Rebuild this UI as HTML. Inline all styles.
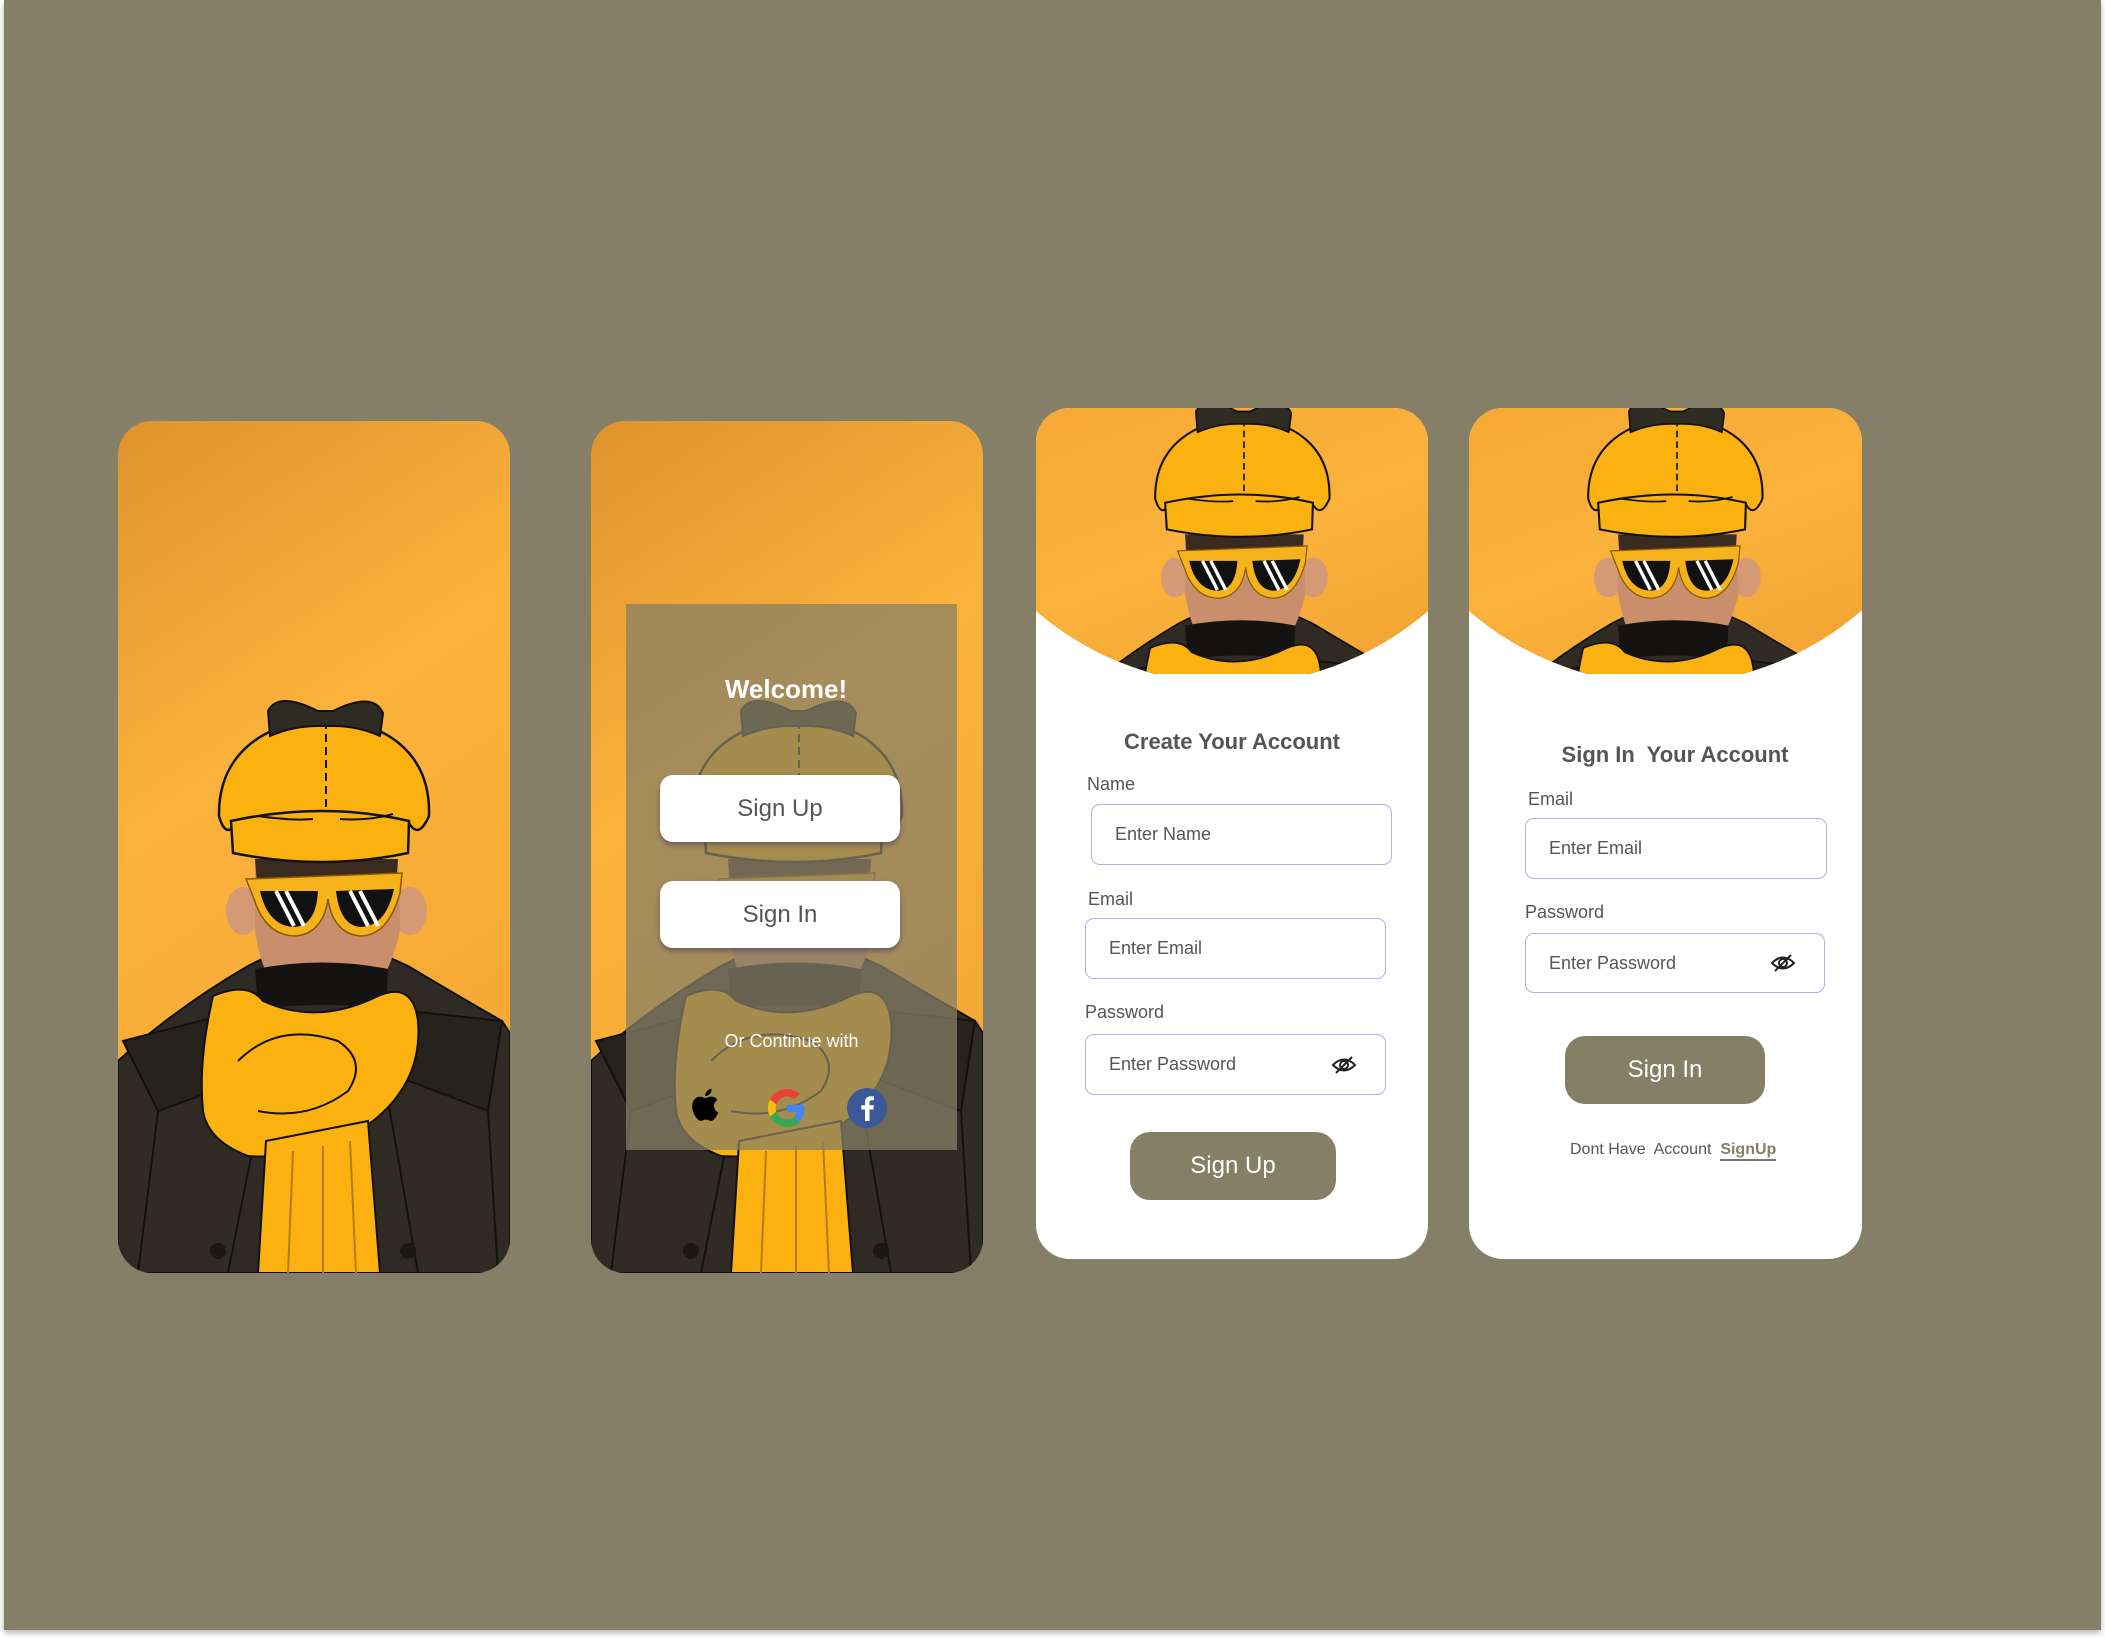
<!DOCTYPE html>
<html><head><meta charset="utf-8">
<style>
*{margin:0;padding:0;box-sizing:border-box}
html,body{width:2105px;height:1638px;background:#fff;overflow:hidden;font-family:"Liberation Sans",sans-serif}
#bg{position:absolute;left:4px;top:0;width:2097px;height:1630px;background:#847f66;box-shadow:0 3px 6px rgba(0,0,0,.3)}
.card{position:absolute;overflow:hidden;border-radius:34px}
.abs{position:absolute}
.wbtn{position:absolute;left:660px;width:240px;height:67px;background:#fff;border-radius:13px;box-shadow:0 3px 5px rgba(60,50,90,.5);color:#555;font-size:24px;text-align:center;line-height:67px}
.lbl{position:absolute;font-size:18px;color:#555}
.inp{position:absolute;border:1.5px solid #b3acee;border-radius:9px;font-size:18px;color:#555;padding-left:23px;display:flex;align-items:center}
.obtn{position:absolute;background:#857f66;border-radius:20px;color:#fff;font-size:24px;text-align:center}
.title{position:absolute;font-size:22px;font-weight:bold;color:#555;text-align:center;width:392px}
.eye{position:absolute;right:28px;top:50%;margin-top:-10px}
.top{position:absolute;left:0;top:0;height:266px;overflow:hidden;clip-path:circle(300px at 196px -24px);background:linear-gradient(160deg,#f7a835,#fbb23c 50%,#f0a232)}
</style></head><body>
<div id="bg"></div>
<svg width="0" height="0" style="position:absolute">
<defs>
<linearGradient id="og" x1="0" y1="0" x2="0.3" y2="1"><stop offset="0" stop-color="#df932e"/><stop offset=".45" stop-color="#fbb23c"/><stop offset="1" stop-color="#f5a834"/></linearGradient>
<g id="fig">
<path d="M0,852 L0,640 L20,622 Q70,580 130,545 L180,520 L235,520 L290,545 Q340,575 384,600 L392,612 L392,852 Z" fill="#2f2b24" stroke="#111" stroke-width="2"/>
<path d="M5,620 L120,590 L150,650 L40,690 Z" fill="#26231d" stroke="#111" stroke-width="2"/>
<path d="M384,600 L290,590 L265,650 L370,690 Z" fill="#26231d" stroke="#111" stroke-width="2"/>
<path d="M40,690 L20,852 M370,690 L380,852 M150,650 L110,852 M265,650 L300,852" stroke="#111" stroke-width="2" fill="none"/>
<circle cx="100" cy="830" r="8" fill="#1a1815"/><circle cx="290" cy="830" r="8" fill="#1a1815"/>
<ellipse cx="125" cy="490" rx="17" ry="24" fill="#d49a75"/>
<ellipse cx="292" cy="490" rx="17" ry="24" fill="#d49a75"/>
<path d="M137,440 L280,440 L282,510 Q270,560 250,575 L165,575 Q145,560 137,510 Z" fill="#c98f6c"/>
<path d="M137,438 L280,438 L278,462 L139,462 Z" fill="#3a2a20"/>
<path d="M137,548 Q205,535 270,548 L268,588 Q205,580 140,588 Z" fill="#141312"/>
<path d="M95,575 Q130,560 145,580 Q200,605 260,575 Q295,560 300,600 Q305,660 255,700 Q200,740 130,735 Q90,720 85,690 Q80,640 95,575 Z" fill="#fbb10f" stroke="#111" stroke-width="2"/>
<path d="M120,640 Q160,600 220,620 Q250,640 230,670 Q190,700 140,690" fill="none" stroke="#111" stroke-width="2"/>
<path d="M148,720 L250,700 L262,852 L140,852 Z" fill="#fbb10f" stroke="#111" stroke-width="2"/>
<path d="M175,730 L170,852 M205,725 L205,852 M232,720 L238,852" stroke="#b57d08" stroke-width="2"/>
<path d="M128,458 L284,452 L282,472 Q270,515 242,515 Q215,512 210,478 Q205,512 178,515 Q148,515 136,478 Z" fill="#f6b21a" stroke="#8a5a00" stroke-width="1.5"/>
<path d="M142,470 L200,470 Q198,505 176,506 Q150,505 142,470 Z" fill="#111"/>
<path d="M218,470 L276,468 Q268,505 243,506 Q222,505 218,470 Z" fill="#111"/>
<path d="M158,470 L176,505 M168,470 L186,505 M232,470 L250,505 M242,470 L260,505" stroke="#fff" stroke-width="4"/>
<path d="M101,395 C100,330 150,300 208,298 C265,300 313,330 311,395 Q300,420 290,400 L120,400 Q108,420 101,395 Z" fill="#fbb10f" stroke="#111" stroke-width="2.5"/>
<path d="M208,300 L208,430" stroke="#111" stroke-width="2" stroke-dasharray="8 5"/>
<path d="M113,400 Q205,380 291,400 L290,432 Q205,450 115,432 Z" fill="#fbb10f" stroke="#111" stroke-width="2.5"/>
<path d="M140,395 Q175,400 195,398 M222,398 Q250,400 275,393" stroke="#111" stroke-width="2" fill="none"/>
<path d="M150,290 Q160,270 200,290 L215,290 Q255,270 265,292 L262,315 Q240,305 215,305 L200,305 Q175,305 152,315 Z" fill="#2d2b22" stroke="#111" stroke-width="2"/>
</g>
<g id="guy"><rect width="392" height="852" fill="url(#og)"/><use href="#fig"/></g>
</defs>
</svg>

<div class="card" style="left:118px;top:421px;width:392px;height:852px">
<svg width="392" height="852"><use href="#guy"/></svg>
</div>

<div class="card" style="left:591px;top:421px;width:392px;height:852px">
<svg width="392" height="852"><use href="#guy"/></svg>
</div>
<div class="abs" style="left:626px;top:604px;width:331px;height:546px;background:rgba(133,127,102,.74)"></div>
<div class="abs" style="left:626px;top:674px;width:320px;text-align:center;color:#fff;font-size:26px;font-weight:bold">Welcome!</div>
<div class="wbtn" style="top:775px">Sign Up</div>
<div class="wbtn" style="top:881px">Sign In</div>
<div class="abs" style="left:626px;top:1031px;width:331px;text-align:center;color:#fff;font-size:18px">Or Continue with</div>
<svg class="abs" style="left:688px;top:1085px" width="38" height="40" viewBox="0 0 24 24"><path fill="#000" d="M16.4 12.6c0-2.6 2.1-3.8 2.2-3.9-1.2-1.8-3.1-2-3.700-2-1.6-.2-3.1.9-3.9.9-.8 0-2-.9-3.3-.9-1.7 0-3.3 1-4.200 2.5-1.8 3.100-.5 7.700 1.300 10.200.9 1.200 1.900 2.600 3.200 2.600 1.300-.1 1.800-.8 3.300-.8 1.600 0 2 .8 3.300.8 1.400 0 2.300-1.300 3.100-2.500 1-1.400 1.400-2.800 1.400-2.900-.1 0-2.700-1-2.700-4zM13.9 4.9c.7-.9 1.2-2 1-3.2-1 0-2.3.7-3 1.6-.7.8-1.2 2-1.1 3.1 1.2.1 2.3-.6 3.1-1.5z"/></svg>
<svg class="abs" style="left:768px;top:1089px" width="38" height="38" viewBox="0 0 48 48"><path fill="#EA4335" d="M24 9.5c3.5 0 6.7 1.2 9.2 3.6l6.9-6.9C35.9 2.4 30.4 0 24 0 14.6 0 6.6 5.4 2.6 13.3l8 6.2C12.6 13.6 17.8 9.5 24 9.5z"/><path fill="#4285F4" d="M46.1 24.5c0-1.6-.1-3.1-.4-4.5H24v9h12.4c-.5 2.9-2.2 5.4-4.7 7l7.7 6c4.5-4.1 6.7-10.2 6.7-17.5z"/><path fill="#FBBC05" d="M10.5 28.6c-.5-1.5-.8-3-.8-4.6s.3-3.1.8-4.6l-8-6.2C.9 16.5 0 20.1 0 24s.9 7.5 2.6 10.8l7.9-6.2z"/><path fill="#34A853" d="M24 48c6.5 0 11.9-2.1 15.9-5.8l-7.7-6c-2.2 1.5-5 2.3-8.2 2.3-6.2 0-11.4-4.2-13.3-9.8l-8 6.2C6.6 42.6 14.6 48 24 48z"/></svg>
<svg class="abs" style="left:846px;top:1087px" width="42" height="42" viewBox="0 0 42 42"><circle cx="21" cy="21" r="20" fill="#3b5998"/><path fill="#fff" d="M23.5 34V22.5h3.8l.6-4.3h-4.4v-2.8c0-1.2.4-2.1 2.2-2.1h2.3V9.5c-.4 0-1.8-.2-3.4-.2-3.3 0-5.6 2-5.6 5.8v3.1h-3.7v4.3H19V34z"/></svg>

<div class="card" style="left:1036px;top:408px;width:392px;height:851px;background:#fff">
<div class="top" style="width:392px">
<svg width="392" height="266"><g transform="translate(208,1) scale(.83) translate(-208,-287)"><use href="#fig"/></g></svg>
</div>
<div class="title" style="top:321px">Create Your Account</div>
<div class="lbl" style="left:51px;top:366px">Name</div>
<div class="inp" style="left:55px;top:396px;width:301px;height:61px">Enter Name</div>
<div class="lbl" style="left:52px;top:481px">Email</div>
<div class="inp" style="left:49px;top:510px;width:301px;height:61px">Enter Email</div>
<div class="lbl" style="left:49px;top:594px">Password</div>
<div class="inp" style="left:49px;top:626px;width:301px;height:61px">Enter Password
<svg class="eye" width="26" height="20" viewBox="0 0 26 20"><path d="M2,10 Q13,-1 24,10 Q13,21 2,10 Z" fill="none" stroke="#222" stroke-width="2"/><circle cx="13" cy="10" r="4" fill="none" stroke="#222" stroke-width="2"/><path d="M5,18 L21,2" stroke="#222" stroke-width="2"/></svg></div>
<div class="obtn" style="left:94px;top:724px;width:206px;height:68px;line-height:68px">Sign Up</div>
</div>

<div class="card" style="left:1469px;top:408px;width:393px;height:851px;background:#fff">
<div class="top" style="width:393px">
<svg width="393" height="266"><g transform="translate(208,1) scale(.83) translate(-208,-287)"><use href="#fig"/></g></svg>
</div>
<div class="title" style="top:334px;left:10px">Sign In&nbsp; Your Account</div>
<div class="lbl" style="left:59px;top:381px">Email</div>
<div class="inp" style="left:56px;top:410px;width:302px;height:61px">Enter Email</div>
<div class="lbl" style="left:56px;top:494px">Password</div>
<div class="inp" style="left:56px;top:525px;width:300px;height:60px">Enter Password
<svg class="eye" width="26" height="20" viewBox="0 0 26 20"><path d="M2,10 Q13,-1 24,10 Q13,21 2,10 Z" fill="none" stroke="#222" stroke-width="2"/><circle cx="13" cy="10" r="4" fill="none" stroke="#222" stroke-width="2"/><path d="M5,18 L21,2" stroke="#222" stroke-width="2"/></svg></div>
<div class="obtn" style="left:96px;top:628px;width:200px;height:68px;line-height:68px">Sign In</div>
<div class="abs" style="left:101px;top:733px;font-size:16px;color:#555;white-space:nowrap">Dont Have&nbsp; Account&nbsp; <span style="color:#857f66;font-weight:bold;border-bottom:2px solid #777;padding-bottom:1px">SignUp</span></div>
</div>
</body></html>
